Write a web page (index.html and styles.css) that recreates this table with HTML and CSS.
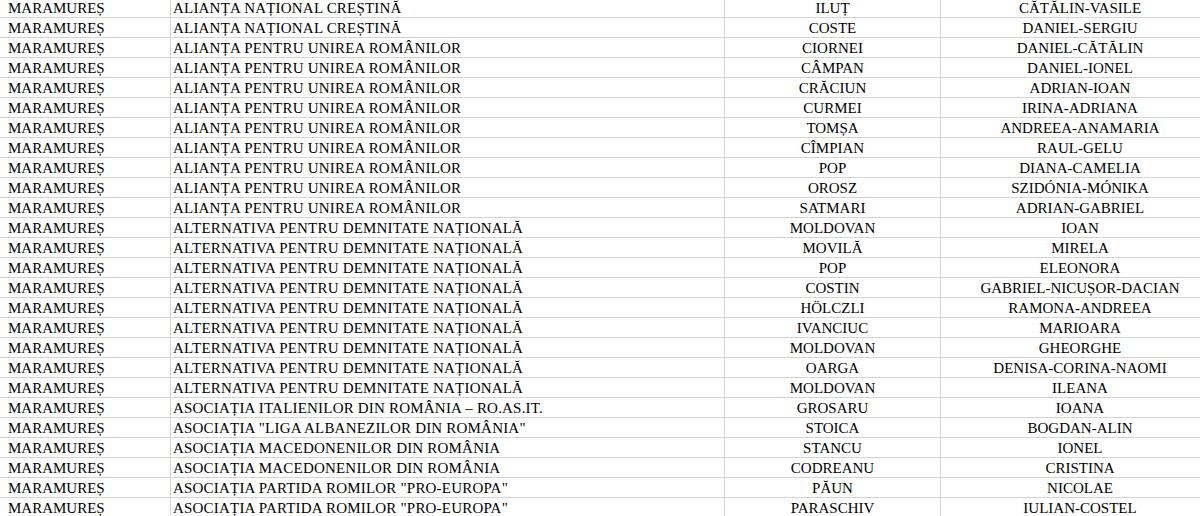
FILE: index.html
```html
<!DOCTYPE html>
<html lang="ro">
<head>
<meta charset="utf-8">
<title>Candidați</title>
<link rel="stylesheet" href="styles.css">
</head>
<body>
<table class="sheet">
<colgroup>
<col class="c-county"><col class="c-party"><col class="c-last"><col class="c-first">
</colgroup>
<tbody>
<tr><td class="county">MARAMUREȘ</td><td class="party">ALIANȚA NAȚIONAL CREȘTINĂ</td><td class="name">ILUȚ</td><td class="name">CĂTĂLIN-VASILE</td></tr>
<tr><td class="county">MARAMUREȘ</td><td class="party">ALIANȚA NAȚIONAL CREȘTINĂ</td><td class="name">COSTE</td><td class="name">DANIEL-SERGIU</td></tr>
<tr><td class="county">MARAMUREȘ</td><td class="party">ALIANȚA PENTRU UNIREA ROMÂNILOR</td><td class="name">CIORNEI</td><td class="name">DANIEL-CĂTĂLIN</td></tr>
<tr><td class="county">MARAMUREȘ</td><td class="party">ALIANȚA PENTRU UNIREA ROMÂNILOR</td><td class="name">CÂMPAN</td><td class="name">DANIEL-IONEL</td></tr>
<tr><td class="county">MARAMUREȘ</td><td class="party">ALIANȚA PENTRU UNIREA ROMÂNILOR</td><td class="name">CRĂCIUN</td><td class="name">ADRIAN-IOAN</td></tr>
<tr><td class="county">MARAMUREȘ</td><td class="party">ALIANȚA PENTRU UNIREA ROMÂNILOR</td><td class="name">CURMEI</td><td class="name">IRINA-ADRIANA</td></tr>
<tr><td class="county">MARAMUREȘ</td><td class="party">ALIANȚA PENTRU UNIREA ROMÂNILOR</td><td class="name">TOMȘA</td><td class="name">ANDREEA-ANAMARIA</td></tr>
<tr><td class="county">MARAMUREȘ</td><td class="party">ALIANȚA PENTRU UNIREA ROMÂNILOR</td><td class="name">CÎMPIAN</td><td class="name">RAUL-GELU</td></tr>
<tr><td class="county">MARAMUREȘ</td><td class="party">ALIANȚA PENTRU UNIREA ROMÂNILOR</td><td class="name">POP</td><td class="name">DIANA-CAMELIA</td></tr>
<tr><td class="county">MARAMUREȘ</td><td class="party">ALIANȚA PENTRU UNIREA ROMÂNILOR</td><td class="name">OROSZ</td><td class="name">SZIDÓNIA-MÓNIKA</td></tr>
<tr><td class="county">MARAMUREȘ</td><td class="party">ALIANȚA PENTRU UNIREA ROMÂNILOR</td><td class="name">SATMARI</td><td class="name">ADRIAN-GABRIEL</td></tr>
<tr><td class="county">MARAMUREȘ</td><td class="party">ALTERNATIVA PENTRU DEMNITATE NAȚIONALĂ</td><td class="name">MOLDOVAN</td><td class="name">IOAN</td></tr>
<tr><td class="county">MARAMUREȘ</td><td class="party">ALTERNATIVA PENTRU DEMNITATE NAȚIONALĂ</td><td class="name">MOVILĂ</td><td class="name">MIRELA</td></tr>
<tr><td class="county">MARAMUREȘ</td><td class="party">ALTERNATIVA PENTRU DEMNITATE NAȚIONALĂ</td><td class="name">POP</td><td class="name">ELEONORA</td></tr>
<tr><td class="county">MARAMUREȘ</td><td class="party">ALTERNATIVA PENTRU DEMNITATE NAȚIONALĂ</td><td class="name">COSTIN</td><td class="name">GABRIEL-NICUȘOR-DACIAN</td></tr>
<tr><td class="county">MARAMUREȘ</td><td class="party">ALTERNATIVA PENTRU DEMNITATE NAȚIONALĂ</td><td class="name">HÖLCZLI</td><td class="name">RAMONA-ANDREEA</td></tr>
<tr><td class="county">MARAMUREȘ</td><td class="party">ALTERNATIVA PENTRU DEMNITATE NAȚIONALĂ</td><td class="name">IVANCIUC</td><td class="name">MARIOARA</td></tr>
<tr><td class="county">MARAMUREȘ</td><td class="party">ALTERNATIVA PENTRU DEMNITATE NAȚIONALĂ</td><td class="name">MOLDOVAN</td><td class="name">GHEORGHE</td></tr>
<tr><td class="county">MARAMUREȘ</td><td class="party">ALTERNATIVA PENTRU DEMNITATE NAȚIONALĂ</td><td class="name">OARGA</td><td class="name">DENISA-CORINA-NAOMI</td></tr>
<tr><td class="county">MARAMUREȘ</td><td class="party">ALTERNATIVA PENTRU DEMNITATE NAȚIONALĂ</td><td class="name">MOLDOVAN</td><td class="name">ILEANA</td></tr>
<tr><td class="county">MARAMUREȘ</td><td class="party">ASOCIAȚIA ITALIENILOR DIN ROMÂNIA – RO.AS.IT.</td><td class="name">GROSARU</td><td class="name">IOANA</td></tr>
<tr><td class="county">MARAMUREȘ</td><td class="party">ASOCIAȚIA "LIGA ALBANEZILOR DIN ROMÂNIA"</td><td class="name">STOICA</td><td class="name">BOGDAN-ALIN</td></tr>
<tr><td class="county">MARAMUREȘ</td><td class="party">ASOCIAȚIA MACEDONENILOR DIN ROMÂNIA</td><td class="name">STANCU</td><td class="name">IONEL</td></tr>
<tr><td class="county">MARAMUREȘ</td><td class="party">ASOCIAȚIA MACEDONENILOR DIN ROMÂNIA</td><td class="name">CODREANU</td><td class="name">CRISTINA</td></tr>
<tr><td class="county">MARAMUREȘ</td><td class="party">ASOCIAȚIA PARTIDA ROMILOR "PRO-EUROPA"</td><td class="name">PĂUN</td><td class="name">NICOLAE</td></tr>
<tr><td class="county">MARAMUREȘ</td><td class="party">ASOCIAȚIA PARTIDA ROMILOR "PRO-EUROPA"</td><td class="name">PARASCHIV</td><td class="name">IULIAN-COSTEL</td></tr>
</tbody>
</table>
</body>
</html>
```
FILE: styles.css
```css
html, body {
  margin: 0;
  padding: 0;
  background: #ffffff;
  overflow: hidden;
}

.sheet {
  margin-top: -2px;
  border-collapse: separate;
  border-spacing: 0;
  table-layout: fixed;
  width: 1219px;
  font-family: "Liberation Serif", "Times New Roman", serif;
  font-size: 15px;
  color: #000000;
}

.c-county { width: 171px; }
.c-party { width: 554px; }
.c-last { width: 216px; }
.c-first { width: 278px; }

.sheet td {
  box-sizing: border-box;
  height: 20px;
  padding: 2px 0 0 0;
  line-height: 17px;
  white-space: nowrap;
  overflow: hidden;
  vertical-align: top;
  border-bottom: 1px solid #d4d4d4;
  border-right: 1px solid #d4d4d4;
}

.sheet td.county {
  padding-left: 8px;
  text-align: left;
}

.sheet td.party {
  padding-left: 2px;
  text-align: left;
  letter-spacing: 0.2px;
}

.sheet td.name {
  text-align: center;
}

.sheet td:last-child {
  border-right: none;
}
```
